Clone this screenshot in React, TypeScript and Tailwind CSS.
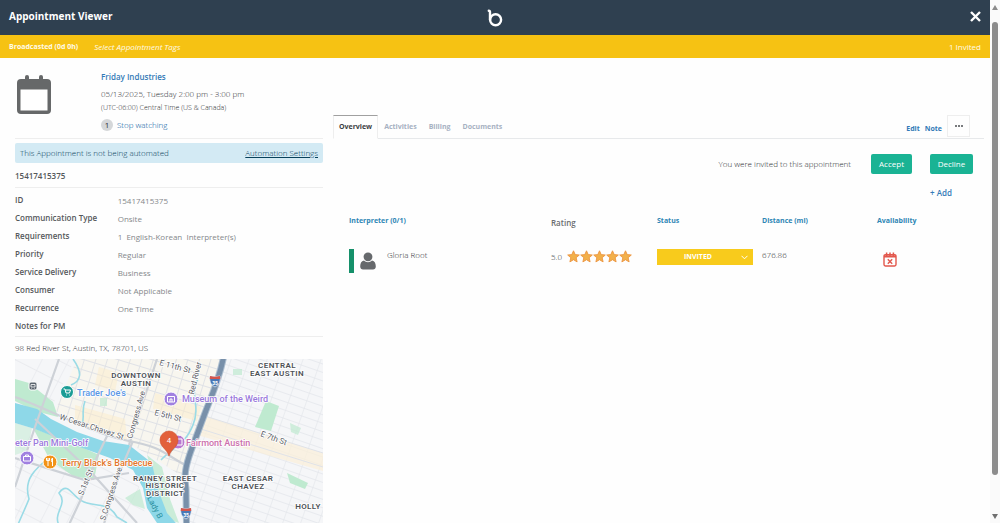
import { useState } from 'react';

const details = [
    { label: 'ID', value: '15417415375' },
    { label: 'Communication Type', value: 'Onsite' },
    { label: 'Requirements', value: '1\u00a0 English-Korean\u00a0 Interpreter(s)' },
    { label: 'Priority', value: 'Regular' },
    { label: 'Service Delivery', value: 'Business' },
    { label: 'Consumer', value: 'Not Applicable' },
    { label: 'Recurrence', value: 'One Time' },
    { label: 'Notes for PM', value: '' },
];

const tabs = ['Overview', 'Activities', 'Billing', 'Documents'];

function Logo() {
    return (
        <svg width="16" height="18" viewBox="0 0 16 18" fill="none" stroke="white" strokeWidth="2.4" strokeLinecap="round">
            <path d="M1.8 1.7 Q3 1.7 3 3.2 V10.800" />
            <circle cx="8.600" cy="10.800" r="5.500" />
        </svg>
    );
}

function CalendarIcon() {
    return (
        <svg width="34" height="39" viewBox="0 0 34 39" className="shrink-0">
            <rect x="8" y="0" width="4" height="9" rx="2" fill="#666869" />
            <rect x="22" y="0" width="4" height="9" rx="2" fill="#666869" />
            <rect x="0" y="4" width="34" height="35" rx="4" fill="#666869" />
            <rect x="3.5" y="14.5" width="27" height="21" fill="white" />
        </svg>
    );
}

function UserIcon() {
    return (
        <svg width="16" height="18" viewBox="0 0 16 18" fill="#66696c">
            <circle cx="8" cy="4.8" r="4.4" />
            <path d="M4 8.5 C1.2 9 0.2 11.5 0.2 14.6 C0.2 16.6 1.4 17.6 3 17.6 H13 C14.6 17.6 15.8 16.6 15.8 14.6 C15.8 11.5 14.8 9 12 8.5 C9.8 10.7 6.2 10.7 4 8.5 Z" />
        </svg>
    );
}

function Star() {
    return (
        <svg width="13" height="13" viewBox="0 0 13 13">
            <path
                d="M6.5 0.8 L8.2 4.6 L12.3 5 L9.2 7.7 L10.1 11.9 L6.5 9.7 L2.9 11.9 L3.8 7.7 L0.7 5 L4.8 4.6 Z"
                fill="#f2b04a"
                stroke="#ec9440"
                strokeWidth="0.9"
                strokeLinejoin="round"
            />
        </svg>
    );
}

function BusyIcon() {
    return (
        <svg width="14" height="15" viewBox="0 0 14 15" fill="none" stroke="#e2574c" strokeWidth="1.4">
            <rect x="1" y="2.6" width="12" height="11.4" rx="1.4" />
            <path d="M1 4.4 H13" strokeWidth="2.2" />
            <path d="M3.6 0.4 V4 M7 0.4 V4 M10.4 0.4 V4" strokeWidth="1.5" />
            <path d="M4.8 7.2 L9.2 11.8 M9.2 7.2 L4.8 11.8" />
        </svg>
    );
}

function Shield({ x, y }: { x: number; y: number }) {
    return (
        <g transform={`translate(${x} ${y})`}>
            <path d="M-5 -5 Q0 -3.5 5 -5 Q6.5 3 0 6 Q-6.5 3 -5 -5 Z" fill="#4a78b5" stroke="white" strokeWidth="0.6" />
            <path d="M-5 -5 Q0 -3.5 5 -5 L5.3 -2 H-5.3 Z" fill="#d6564c" />
            <text y="3.5" fontSize="5" fontWeight="700" fill="white" textAnchor="middle">35</text>
        </g>
    );
}

function AreaMap() {
    return (
        <svg viewBox="0 0 308 200" className="block w-full font-['Roboto',sans-serif]" role="img" aria-label="Map">
            <defs>
                <pattern id="downtown" width="11" height="10" patternUnits="userSpaceOnUse" patternTransform="rotate(17)">
                    <rect width="11" height="10" fill="#f8f6ef" />
                    <path d="M0 0 H11 M0 0 V10" stroke="#dfe1e6" strokeWidth="1.8" />
                </pattern>
                <pattern id="east" width="17" height="8" patternUnits="userSpaceOnUse" patternTransform="rotate(19)">
                    <path d="M0 0 H17 M0 0 V8" stroke="#e4e6eb" strokeWidth="1.3" />
                </pattern>
                <pattern id="south" width="24" height="19" patternUnits="userSpaceOnUse" patternTransform="rotate(27)">
                    <path d="M0 0 H24 M0 0 V19" stroke="#e6e8ec" strokeWidth="1.3" />
                </pattern>
            </defs>
            <rect width="308" height="200" fill="#f5f6f8" />
            <path d="M0 0 H60 L34 54 L0 40 Z M0 70 L120 110 L140 200 H0 Z" fill="url(#south)" />
            <path d="M62 0 H206 L170 119 L140 100 L114 84 L40 52 Z" fill="url(#downtown)" />
            <path d="M206 0 H308 V200 H172 L170 119 Z" fill="url(#east)" />
            <path d="M190 57 L308 94 V112 L182 76 Z" fill="#fbf0d8" opacity="0.7" />
            <path d="M60 46 L110 60 L112 82 L60 66 Z M84 8 L104 14 L100 32 L80 26 Z M140 34 L186 48 L182 62 L138 50 Z" fill="#fbecca" opacity="0.5" />
            <path d="M190 57 L308 94 M186 70 L308 108" stroke="#dfe2e8" />

            <g fill="#bfead0">
                <path d="M0 20 L14 24 L38 43 L43 58 L20 52 L0 42 Z" />
                <path d="M18 69 L62 86 L84 96 L79 121 L58 117 L35 101 Z" />
                <path d="M0 64 L17 69 L12 92 L0 96 Z" opacity="0.5" />
                <path d="M251 42 L264 47 L256 72 L240 68 Z" />
                <path d="M272 114 L293 124 L290 130 L275 124 Z" />
                <path d="M218 10 H227 V16 H218 Z M275 64 L286 69 L283 76 L276 73 Z" opacity="0.7" />
                <path d="M132 96 L147 108 L155 140 L164 164 L152 160 L141 128 Z" opacity="0.8" />
                <path d="M85 39 H92 V47 H85 Z M110 139 L125 130 L130 150 L118 146 Z" opacity="0.7" />
            </g>

            <path
                d="M0 44 L22 50 L36 60 L62 73 L88 82 L114 86 L137 104 L142 128 L152 154 L168 172 L190 200 H158 L142 164 L132 149 L128 129 L118 111 L95 99 L62 87 L20 70 L0 64 Z"
                fill="#8ed8e8"
            />
            <g fill="none" stroke="#9adbe6" strokeWidth="1.6">
                <path d="M58 0 C68 14 66 22 56 26 M70 42 C66 52 70 58 67 66" />
                <path d="M183 20 C174 34 186 46 178 66 S160 86 146 101" />
                <path d="M37 96 C20 110 8 120 14 140 C10 150 6 158 2 168" />
                <path d="M45 168 C36 154 54 146 44 134 C54 120 58 142 72 144 C86 148 94 144 102 158 L112 164" />
            </g>

            <g fill="none" stroke="#cdd1d7" strokeWidth="2.2">
                <path d="M44 0 L20 68 L0 128" />
                <path d="M0 99 L70 121 L114 114" />
                <path d="M93 75 L82 98 L66 140 L52 170" />
                <path d="M118 82 L106 110 L88 168" />
                <path d="M20 60 L75 112 L122 164" />
                <path d="M0 38 C30 48 80 76 114 82 S150 96 174 108" />
                <path d="M142 0 L114 86" />
            </g>
            <g fill="none">
                <path d="M209 -4 C204 22 196 38 190 54 L177 89 C170 108 169 116 171 130 L172 200" stroke="#adbfd0" strokeWidth="7" />
                <path d="M209 -4 C204 22 196 38 190 54 L177 89 C170 108 169 116 171 130 L172 200" stroke="#7890aa" strokeWidth="5" />
            </g>
            <Shield x={200} y={22} />
            <Shield x={171} y={154} />

            <g fontSize="8" fill="#5c6066" stroke="white" strokeWidth="1.6" paintOrder="stroke" strokeLinejoin="round">
                <text transform="translate(44 60) rotate(18)">W Cesar Chavez St</text>
                <text transform="translate(117 80) rotate(-74)">Congress Ave</text>
                <text transform="translate(68 137) rotate(-68)">S 1st St</text>
                <text transform="translate(90 162) rotate(-72)">S Congress Ave</text>
                <text transform="translate(144 6) rotate(15)">E 11th St</text>
                <text transform="translate(179 36) rotate(-77)">Red River</text>
                <text transform="translate(139 56) rotate(14)">E 5th St</text>
                <text transform="translate(245 77) rotate(20)">E 7th St</text>
            </g>
            <text transform="translate(132 139) rotate(62)" fontSize="8" fill="#2a8f9e">Lady B</text>

            <g
                fontSize="8"
                fontWeight="600"
                fill="#4d5156"
                textAnchor="middle"
                stroke="white"
                strokeWidth="1.6"
                paintOrder="stroke"
                className="tracking-wider"
            >
                <text x="121" y="19">DOWNTOWN</text>
                <text x="121" y="27">AUSTIN</text>
                <text x="262" y="9">CENTRAL</text>
                <text x="262" y="17">EAST AUSTIN</text>
                <text x="150" y="122">RAINEY STREET</text>
                <text x="150" y="129">HISTORIC</text>
                <text x="150" y="137">DISTRICT</text>
                <text x="233" y="122">EAST CESAR</text>
                <text x="233" y="130">CHAVEZ</text>
                <text x="293" y="150">HOLLY</text>
            </g>

            <g stroke="white" strokeWidth="1">
                <rect x="14" y="23" width="8" height="8" rx="2" fill="#5d6670" />
                <circle cx="52" cy="33" r="6.5" fill="#1a9c95" />
                <circle cx="35" cy="103" r="7" fill="#f29318" />
                <circle cx="12" cy="99" r="7" fill="#a080e0" />
                <circle cx="156" cy="40" r="7" fill="#a080e0" />
                <circle cx="163" cy="83" r="7" fill="#b978cf" />
            </g>
            <g fill="none" stroke="white" strokeWidth="1">
                <path d="M16 25.5 H20 V28 H16 Z M16.5 29.5 V30 M19.5 29.5 V30" strokeWidth="0.8" />
                <path d="M48.5 30 H50 L51 34 H54.5 L55.5 31 H50.5" />
                <path d="M51.5 36 H52 M54 36 H54.5" strokeWidth="1.3" />
                <path d="M33 99 V107 M31.5 99 V101.5 H34.5 V99 M37.5 107 V99 C36 100 36 103 37.5 103.5" />
                <path d="M8.5 97.5 H15.5 V102 H8.5 Z M10.5 97.5 V96 H13.5 V97.5" />
                <path d="M152.5 37.5 H159.5 V43 H152.5 Z M155 43 V40 H157 V43" />
                <path d="M162 80 H167 V86 H162" />
            </g>

            <g fontSize="9" fontWeight="500" stroke="white" strokeWidth="1.6" paintOrder="stroke" strokeLinejoin="round">
                <text x="62" y="37" fill="#5a97e6">Trader Joe's</text>
                <text x="167" y="43" fill="#9a79dc">Museum of the Weird</text>
                <text x="171" y="87" fill="#cc6fac">Fairmont Austin</text>
                <text x="0" y="87" fill="#9a79dc">eter Pan Mini-Golf</text>
                <text x="46" y="107" fill="#e3762a">Terry Black's Barbecue</text>
            </g>

            <path d="M154 97 C152 90 145 88 145 81 A9 9 0 0 1 163 81 C163 88 156 90 154 97 Z" fill="#e2603a" stroke="#cf4f2c" strokeWidth="0.6" />
            <text x="154" y="84" fontSize="8" fill="white" textAnchor="middle">4</text>
        </svg>
    );
}

export default function App() {
    const [activeTab, setActiveTab] = useState('Overview');
    const [status, setStatus] = useState('INVITED');

    return (
        <div className="flex h-screen overflow-hidden bg-[#fefefe] font-['Open_Sans',sans-serif] text-[8px] leading-3 text-[#2b2d30]">
            <div className="min-w-0 flex-1">
                <header className="grid h-[35px] grid-cols-3 items-center bg-[#2f4050] px-2 text-white">
                    <h1 className="pb-1 pl-px text-[10px] leading-4 font-bold">Appointment Viewer</h1>
                    <div className="flex justify-center">
                        <Logo />
                    </div>
                    <button type="button" aria-label="Close" className="justify-self-end pb-0.5">
                        <svg width="13" height="13" viewBox="0 0 13 13" fill="none" stroke="white" strokeWidth="2.4">
                            <path d="M2 2 L11 11 M11 2 L2 11" />
                        </svg>
                    </button>
                </header>

                <div className="flex h-[23px] items-center gap-4 bg-[#f6c213] px-[9px] text-[#fffbe8]">
                    <span className="text-[7px] font-bold">Broadcasted (0d 0h)</span>
                    <button type="button" className="font-medium italic">Select Appointment Tags</button>
                    <span className="ml-auto">1 Invited</span>
                </div>

                <main className="grid grid-cols-[308fr_651fr] gap-2.5 pr-1.5 pl-[15px]">
                    <section className="min-w-0">
                        <div className="flex h-[81px] items-start border-b border-[#eeeeee] pt-[13px] pl-0.5">
                            <div className="w-[84px] pt-1">
                                <CalendarIcon />
                            </div>
                            <div>
                                <h2 className="font-semibold text-[#337ab7]">Friday Industries</h2>
                                <p className="mt-[5px] font-light">05/13/2025, Tuesday 2:00 pm - 3:00 pm</p>
                                <p className="mt-0.5 text-[7px] font-light">(UTC-06:00) Central Time (US &amp; Canada)</p>
                                <div className="mt-[5px] flex items-center gap-1">
                                    <span className="size-3 rounded-full bg-[#d5d7d9] text-center">1</span>
                                    <button type="button" className="font-light text-[#00559c]">Stop watching</button>
                                </div>
                            </div>
                        </div>

                        <div className="mt-1 flex h-5 items-center justify-between rounded-xs bg-[#d3eaf4] px-[5px] font-light text-[#07405a]">
                            <span>This Appointment is not being automated</span>
                            <a href="#automation" className="underline">Automation Settings</a>
                        </div>

                        <h3 className="border-b border-[#eeeeee] pt-[7px] pb-[5px] font-semibold text-[#55585b]">15417415375</h3>

                        <dl className="border-b border-[#eeeeee] pt-[3px] pb-px">
                            {details.map((row) => (
                                <div key={row.label} className="grid h-[18px] grid-cols-[1fr_2fr] items-center">
                                    <dt className="font-semibold text-[#55585b]">{row.label}</dt>
                                    <dd className="pt-0.5 text-[#85888b]">{row.value}</dd>
                                </div>
                            ))}
                        </dl>

                        <p className="pt-[5px] pb-[5px] font-light">98 Red River St, Austin, TX, 78701, US</p>
                        <AreaMap />
                    </section>

                    <section className="min-w-0 pt-[57px]">
                        <div className="flex h-6 items-stretch border-b border-[#e7e9eb]">
                            {tabs.map((tab) => (
                                <button
                                    key={tab}
                                    type="button"
                                    onClick={() => setActiveTab(tab)}
                                    className={
                                        tab === activeTab
                                            ? '-mb-px border border-[#eeeeee] border-t-[#a0a0a0] border-b-[#fefefe] px-[5px] text-[7px] font-bold text-[#3c3f42]'
                                            : 'px-1.5 text-[7px] font-bold text-[#a7b1c2]'
                                    }
                                >
                                    {tab}
                                </button>
                            ))}
                            <div className="mr-3.5 ml-auto flex items-center gap-[5px] text-[7px] font-bold text-[#337ab7]">
                                <button type="button" className="pt-1">Edit</button>
                                <button type="button" className="pt-1">Note</button>
                                <button
                                    type="button"
                                    aria-label="More"
                                    className="flex h-[22px] w-[23px] items-center justify-center self-start border border-[#eeeeee]"
                                >
                                    <svg width="8" height="2" viewBox="0 0 8 2" fill="#4b4e52">
                                        <circle cx="1" cy="1" r="1" />
                                        <circle cx="4" cy="1" r="1" />
                                        <circle cx="7" cy="1" r="1" />
                                    </svg>
                                </button>
                            </div>
                        </div>

                        <div className="mt-[15px] mr-[11px] flex items-center justify-end">
                            <span className="mr-5 font-light">You were invited to this appointment</span>
                            <button type="button" className="mr-[18px] h-5 w-[41px] rounded-xs bg-[#1ab394] text-white">Accept</button>
                            <button type="button" className="h-5 w-[43px] rounded-xs bg-[#1ab394] text-white">Decline</button>
                        </div>
                        <div className="mt-[13px] mr-8 text-right">
                            <button type="button" className="font-semibold text-[#337ab7]">+ Add</button>
                        </div>

                        <div className="pt-4 pl-4">
                            <table className="w-full table-fixed text-left">
                                <thead className="text-[7px] text-[#2f86b5]">
                                    <tr className="align-top">
                                        <th className="font-bold">Interpreter (0/1)</th>
                                        <th className="w-[106px] pt-0.5 text-[8px] font-semibold text-[#6a6c6f]">Rating</th>
                                        <th className="w-[105px] font-bold">Status</th>
                                        <th className="w-[115px] font-bold">Distance (mi)</th>
                                        <th className="w-[107px] font-bold">Availability</th>
                                    </tr>
                                </thead>
                                <tbody>
                                    <tr className="align-top">
                                        <td className="pt-5">
                                            <div className="flex items-start">
                                                <span className="h-6 w-[5px] bg-[#15906a]" />
                                                <span className="pt-[3px] pl-1.5">
                                                    <UserIcon />
                                                </span>
                                                <span className="pl-[11px] font-light">Gloria Root</span>
                                            </div>
                                        </td>
                                        <td className="pt-5">
                                            <div className="flex items-center">
                                                <span className="w-4 pt-0.5 font-light">5.0</span>
                                                {[1, 2, 3, 4, 5].map((n) => (
                                                    <Star key={n} />
                                                ))}
                                            </div>
                                        </td>
                                        <td className="pt-5">
                                            <div className="relative w-[96px]">
                                                <select
                                                    aria-label="Status"
                                                    value={status}
                                                    onChange={(e) => setStatus(e.target.value)}
                                                    className="block h-4 w-full appearance-none bg-[#f8cb1c] pr-3.5 text-center text-[7px] font-bold text-white [text-align-last:center]"
                                                >
                                                    <option>INVITED</option>
                                                </select>
                                                <svg
                                                    className="pointer-events-none absolute top-1.5 right-[5px]"
                                                    width="7"
                                                    height="5"
                                                    viewBox="0 0 7 5"
                                                    fill="none"
                                                    stroke="white"
                                                >
                                                    <path d="M0.5 0.8 L3.5 3.8 L6.5 0.8" />
                                                </svg>
                                            </div>
                                        </td>
                                        <td className="pt-5 font-light">676.86</td>
                                        <td className="pt-[23px] pl-1.5">
                                            <BusyIcon />
                                        </td>
                                    </tr>
                                </tbody>
                            </table>
                        </div>
                    </section>
                </main>
            </div>

            {/* Scroll track */}
            <div className="flex w-2.5 flex-col items-center bg-[#fafafa] pt-[5px] pb-1">
                <svg width="6" height="5" viewBox="0 0 6 5" fill="#8b8b8b">
                    <path d="M3 0 L6 5 H0 Z" />
                </svg>
                <div className="mt-3 mb-[39px] w-1.5 flex-1 rounded-full bg-[#8b8b8b]" />
                <svg width="6" height="5" viewBox="0 0 6 5" fill="#6f6f6f">
                    <path d="M0 0 H6 L3 5 Z" />
                </svg>
            </div>
        </div>
    );
}
